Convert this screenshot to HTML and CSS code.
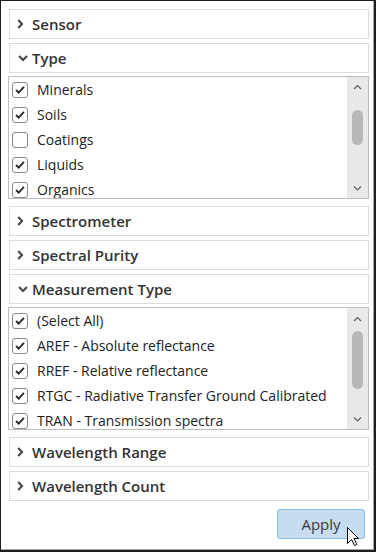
FILE: index.html
```html
<!DOCTYPE html>
<html lang="en">
  <head>
    <meta charset="UTF-8" />
    <meta name="viewport" content="width=device-width, initial-scale=1.0" />
    <title>Filters</title>
    <link rel="stylesheet" href="styles.css">
  </head>
  <body>
    <div class="window">
      <div class="panel">
        <div class="section">
          <svg class="chev" viewBox="0 0 10 10"><path d="M1.2 1 L5 5 L1.2 9" /></svg>
          <span class="title">Sensor</span>
        </div>
        <div class="section open">
          <svg class="chev" viewBox="0 0 10 10"><path d="M2 3 L6 7 L10 3" /></svg>
          <span class="title">Type</span>
        </div>
        <div class="list">
          <ul class="items">
            <li class="item"><span class="box checked"><svg viewBox="0 0 16 16"><path d="M3.5 8 L6.5 11 L12.5 4.5" /></svg></span>Minerals</li>
            <li class="item"><span class="box checked"><svg viewBox="0 0 16 16"><path d="M3.5 8 L6.5 11 L12.5 4.5" /></svg></span>Soils</li>
            <li class="item"><span class="box"></span>Coatings</li>
            <li class="item"><span class="box checked"><svg viewBox="0 0 16 16"><path d="M3.5 8 L6.5 11 L12.5 4.5" /></svg></span>Liquids</li>
            <li class="item"><span class="box checked"><svg viewBox="0 0 16 16"><path d="M3.5 8 L6.5 11 L12.5 4.5" /></svg></span>Organics</li>
          </ul>
          <div class="scrollbar">
            <svg class="arrow" viewBox="0 0 21 20"><path d="M7 12 L10.5 8.5 L14 12" /></svg>
            <span class="thumb" style="margin-top: 13px; height: 35px"></span>
            <svg class="arrow end" viewBox="0 0 21 20"><path d="M7 8.5 L10.5 12 L14 8.5" /></svg>
          </div>
        </div>
        <div class="section">
          <svg class="chev" viewBox="0 0 10 10"><path d="M1.2 1 L5 5 L1.2 9" /></svg>
          <span class="title">Spectrometer</span>
        </div>
        <div class="section">
          <svg class="chev" viewBox="0 0 10 10"><path d="M1.2 1 L5 5 L1.2 9" /></svg>
          <span class="title">Spectral Purity</span>
        </div>
        <div class="section open">
          <svg class="chev" viewBox="0 0 10 10"><path d="M2 3 L6 7 L10 3" /></svg>
          <span class="title">Measurement Type</span>
        </div>
        <div class="list">
          <ul class="items">
            <li class="item"><span class="box checked"><svg viewBox="0 0 16 16"><path d="M3.5 8 L6.5 11 L12.5 4.5" /></svg></span>(Select All)</li>
            <li class="item"><span class="box checked"><svg viewBox="0 0 16 16"><path d="M3.5 8 L6.5 11 L12.5 4.5" /></svg></span>AREF - Absolute reflectance</li>
            <li class="item"><span class="box checked"><svg viewBox="0 0 16 16"><path d="M3.5 8 L6.5 11 L12.5 4.5" /></svg></span>RREF - Relative reflectance</li>
            <li class="item"><span class="box checked"><svg viewBox="0 0 16 16"><path d="M3.5 8 L6.5 11 L12.5 4.5" /></svg></span>RTGC - Radiative Transfer Ground Calibrated</li>
            <li class="item"><span class="box checked"><svg viewBox="0 0 16 16"><path d="M3.5 8 L6.5 11 L12.5 4.5" /></svg></span>TRAN - Transmission spectra</li>
          </ul>
          <div class="scrollbar">
            <svg class="arrow" viewBox="0 0 21 20"><path d="M7 13 L10.5 9.5 L14 13" /></svg>
            <span class="thumb" style="margin-top: 3px; height: 58px"></span>
            <svg class="arrow end" viewBox="0 0 21 20"><path d="M7 8.5 L10.5 12 L14 8.5" /></svg>
          </div>
        </div>
        <div class="section">
          <svg class="chev" viewBox="0 0 10 10"><path d="M1.2 1 L5 5 L1.2 9" /></svg>
          <span class="title">Wavelength Range</span>
        </div>
        <div class="section">
          <svg class="chev" viewBox="0 0 10 10"><path d="M1.2 1 L5 5 L1.2 9" /></svg>
          <span class="title">Wavelength Count</span>
        </div>
        <div class="actions">
          <button class="apply">Apply</button>
        </div>
      </div>
      <!-- mouse pointer over the button -->
      <svg class="cursor" viewBox="0 0 13 20">
        <path d="M0.5 0.5 L0.5 16.5 L4.5 12.5 L7.5 18.5 L9.8 17.5 L6.9 11.5 L11.5 11.5 Z" />
      </svg>
    </div>
  </body>
</html>
```

FILE: styles.css
```css
* {
  box-sizing: border-box;
}

body {
  margin: 0;
  background: #ffffff;
  font-family: "Open Sans", "Noto Sans", sans-serif;
  color: #222222;
}

.window {
  position: relative;
  width: 376px;
  height: 552px;
  border-top: 1px solid #1e1e1e;
  border-left: 1px solid #1e1e1e;
  border-right: 2px solid #1e1e1e;
  border-bottom: 2px solid #1e1e1e;
  box-shadow: inset -1px -1px 0 #a8a8a8;
}

.panel {
  display: flex;
  flex-direction: column;
  padding: 8px 5px 0 8px;
}

.section {
  display: flex;
  align-items: center;
  height: 30px;
  margin-bottom: 4px;
  padding-left: 7px;
  border: 1px solid #dcdcdc;
}

.section.open {
  margin-bottom: 3px;
}

.chev {
  width: 10px;
  height: 10px;
  margin-right: 5px;
  flex: none;
  overflow: visible;
}

.chev path {
  fill: none;
  stroke: #4a4a4a;
  stroke-width: 2.2;
}

.title {
  font-size: 15px;
  font-weight: 600;
  color: #333333;
}

.list {
  display: flex;
  height: 123px;
  margin: 0 0 7px -1px;
  border: 1px solid #bdbdbd;
  overflow: hidden;
}

.items {
  flex: 1;
  margin: 0;
  padding: 0 0 0 3px;
  list-style: none;
  overflow: hidden;
}

.item {
  display: flex;
  align-items: center;
  height: 25px;
  font-size: 14px;
  white-space: nowrap;
}

.box {
  width: 16px;
  height: 16px;
  margin-right: 9px;
  flex: none;
  border: 1px solid #8a8a8a;
  border-radius: 3px;
  background: #ffffff;
}

.box svg {
  display: block;
  width: 14px;
  height: 14px;
}

.box path {
  fill: none;
  stroke: #2b2b2b;
  stroke-width: 2.2;
}

.scrollbar {
  display: flex;
  flex-direction: column;
  align-items: center;
  width: 21px;
  flex: none;
  background: #e9e9e9;
}

.arrow {
  width: 21px;
  height: 20px;
  flex: none;
}

.arrow.end {
  margin-top: auto;
}

.arrow path {
  fill: none;
  stroke: #606060;
  stroke-width: 1.2;
}

.thumb {
  width: 11px;
  flex: none;
  border-radius: 6px;
  background: #b8b8b8;
}

.actions {
  display: flex;
  justify-content: flex-end;
  padding: 4px 4px 0 0;
}

.apply {
  width: 88px;
  height: 30px;
  border: 1px solid #86bde9;
  border-radius: 3px;
  background: #c6dcf1;
  font-family: "Open Sans", "Noto Sans", sans-serif;
  font-size: 15px;
  color: #3a3a3a;
  padding: 0;
}

.cursor {
  position: absolute;
  left: 346px;
  top: 526px;
  width: 13px;
  height: 20px;
}

.cursor path {
  fill: #ffffff;
  stroke: #000000;
  stroke-width: 1;
  stroke-linejoin: miter;
}
```
